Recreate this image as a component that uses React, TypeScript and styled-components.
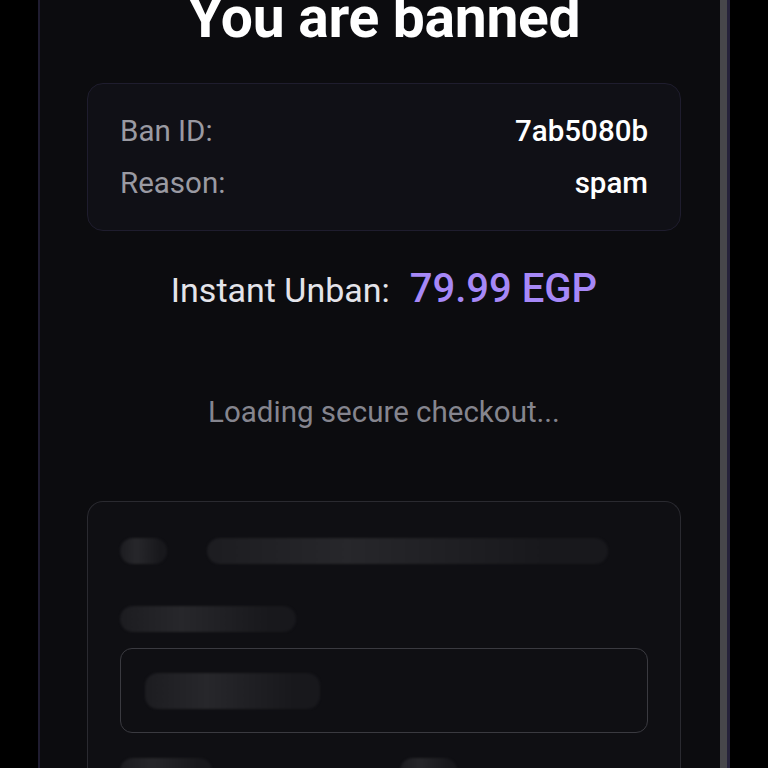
import styled, { createGlobalStyle, keyframes } from "styled-components"

const GlobalStyle = createGlobalStyle`
  html, body {
    margin: 0;
    padding: 0;
    background: #000;
    height: 100%;
    overflow: hidden;
  }
  body {
    font-family: Roboto, "Noto Sans", "Liberation Sans", sans-serif;
    -webkit-font-smoothing: antialiased;
  }
`

const shimmer = keyframes`
  0% { background-position: 65% 0; }
  100% { background-position: -135% 0; }
`

const Page = styled.div`
  display: flex;
  justify-content: center;
  height: 768px;
  padding-left: 38px;
  padding-right: 38px;
`

const Panel = styled.main`
  box-sizing: border-box;
  width: 692px;
  height: 100%;
  background: #0c0c0f;
  border-left: 2px solid #1f1c30;
  border-right: 3px solid #25223a;
  box-shadow: inset -7px 0 0 #47474b;
  padding: 0 46px 0 47px;
  display: flex;
  flex-direction: column;
`

const Title = styled.h1`
  margin: -12px 0 0;
  font-size: 57px;
  line-height: 60px;
  font-weight: 700;
  color: #ffffff;
  text-align: center;
  letter-spacing: -0.3px;
  white-space: nowrap;
`

const InfoCard = styled.section`
  margin-top: 35px;
  height: 151px;
  box-sizing: border-box;
  background: #101016;
  border: 1px solid #1f1d2e;
  border-radius: 16px;
  padding: 29px 32px;
  display: flex;
  flex-direction: column;
  gap: 16px;
`

const InfoRow = styled.div`
  display: flex;
  justify-content: space-between;
  align-items: center;
  height: 36px;
  font-size: 29.5px;
`

const InfoLabel = styled.span`
  color: #9a9aa2;
`

const InfoValue = styled.span`
  color: #ffffff;
  font-weight: 500;
`

const PriceLine = styled.div`
  margin-top: 34px;
  display: flex;
  justify-content: center;
  align-items: baseline;
  gap: 20px;
  height: 40px;
`

const PriceLabel = styled.span`
  font-size: 34px;
  color: #e4e4ea;
`

const PriceValue = styled.span`
  font-size: 40px;
  font-weight: 500;
  color: #a688f7;
`

const Loading = styled.p`
  margin: 91px 0 0;
  font-size: 29.5px;
  line-height: 32px;
  color: #85858e;
  text-align: center;
`

const SkeletonCard = styled.section`
  margin-top: 73px;
  flex: 1;
  box-sizing: border-box;
  background: #0f0f13;
  border: 1px solid #2a2a30;
  border-bottom: none;
  border-radius: 16px 16px 0 0;
  padding: 36px 32px 0;
  display: flex;
  flex-direction: column;
`

const Bone = styled.div<{ w: number; h?: number }>`
  width: ${p => p.w}px;
  height: ${p => p.h ?? 26}px;
  border-radius: 13px;
  background: linear-gradient(90deg, #18181c 25%, #27272b 50%, #18181c 75%);
  background-size: 200% 100%;
  background-position: 65% 0;
  animation: ${shimmer} 2.4s linear infinite;
  animation-play-state: paused;
  filter: blur(1px);
`

const BoneRow = styled.div<{ gap: number; top?: number }>`
  display: flex;
  gap: ${p => p.gap}px;
  margin-top: ${p => p.top ?? 0}px;
`

const FieldBox = styled.div`
  margin-top: 16px;
  height: 85px;
  box-sizing: border-box;
  border: 1px solid #3a3a40;
  border-radius: 12px;
  padding: 0 24px;
  display: flex;
  align-items: center;
`

export default function App() {
  return (
    <>
      <GlobalStyle />
      <Page>
        <Panel>
          <Title>You are banned</Title>
          <InfoCard>
            <InfoRow>
              <InfoLabel>Ban ID:</InfoLabel>
              <InfoValue>7ab5080b</InfoValue>
            </InfoRow>
            <InfoRow>
              <InfoLabel>Reason:</InfoLabel>
              <InfoValue>spam</InfoValue>
            </InfoRow>
          </InfoCard>
          <PriceLine>
            <PriceLabel>Instant Unban:</PriceLabel>
            <PriceValue>79.99 EGP</PriceValue>
          </PriceLine>
          <Loading>Loading secure checkout...</Loading>
          <SkeletonCard>
            <BoneRow gap={40}>
              <Bone w={47} />
              <Bone w={401} />
            </BoneRow>
            <BoneRow gap={0} top={42}>
              <Bone w={176} />
            </BoneRow>
            <FieldBox>
              <Bone w={175} h={36} />
            </FieldBox>
            <BoneRow gap={188} top={25}>
              <Bone w={92} />
              <Bone w={57} />
            </BoneRow>
          </SkeletonCard>
        </Panel>
      </Page>
    </>
  )
}
